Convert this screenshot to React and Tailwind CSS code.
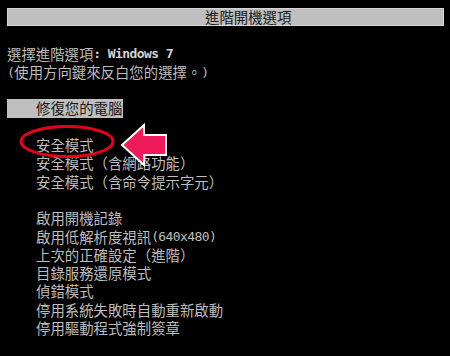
const cjk = { fontFamily: '"Noto Sans CJK TC", "Noto Sans CJK SC", sans-serif' };

function Mono({ children, className = '' }) {
  return (
    <span className={`font-['DejaVu_Sans_Mono',monospace] text-[13px] tracking-[-0.6px] ${className}`}>{children}</span>
  );
}

function Row({ children, className = '' }) {
  return <div className={`flex h-[18.3px] items-center whitespace-pre ${className}`}>{children}</div>;
}

const safeModes = ['安全模式', '安全模式（含網路功能）', '安全模式（含命令提示字元）'];

const otherOptions = [
  '啟用開機記錄',
  <>
    啟用低解析度視訊<Mono>(640x480)</Mono>
  </>,
  '上次的正確設定（進階）',
  '目錄服務還原模式',
  '偵錯模式',
  '停用系統失敗時自動重新啟動',
  '停用驅動程式強制簽章'
];

export default function App() {
  return (
    <div className="relative h-[356px] w-[450px] overflow-hidden bg-black pt-[8px] text-[14.4px] leading-none text-[#bdbdbd]" style={cjk}>
      <Row>
        <div className="ml-[7px] flex h-[18px] w-[437px] items-center border border-[#d6d6d6] bg-[#bfbfbf] pl-[197px] text-[#1a1a1a]">
          進階開機選項
        </div>
      </Row>
      <Row />
      <Row className="pl-[7px]">
        選擇進階選項<Mono className="font-bold text-[#d4d4d4]">: Windows 7</Mono>
      </Row>
      <Row className="pl-[7px]">
        <Mono>(</Mono>使用方向鍵來反白您的選擇。<Mono>)</Mono>
      </Row>
      <Row />
      <Row>
        <div className="ml-[7px] flex h-[19px] w-[116px] items-center bg-[#bfbfbf] pl-[29px] text-[#1a1a1a]">
          修復您的電腦
        </div>
      </Row>
      <Row />
      {safeModes.map((label) => (
        <Row key={label} className="pl-[36px]">
          {label}
        </Row>
      ))}
      <Row />
      {otherOptions.map((label, i) => (
        <Row key={i} className="pl-[36px]">
          {label}
        </Row>
      ))}

      <svg className="pointer-events-none absolute left-0 top-0" width="450" height="356" viewBox="0 0 450 356">
        <ellipse cx="67" cy="141.5" rx="46" ry="15" fill="none" stroke="#e5001c" strokeWidth="3" />
        <path
          d="M122 145 L144 125 L144 135 L166 135 L166 155 L144 155 L144 165 Z"
          fill="#ef1a5b"
          stroke="#ffffff"
          strokeWidth="2"
          strokeLinejoin="miter"
        />
      </svg>
    </div>
  );
}
